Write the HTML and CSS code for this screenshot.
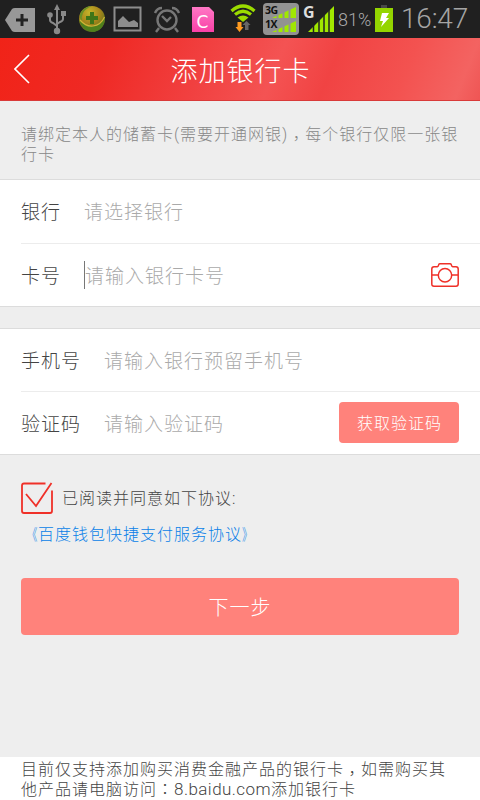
FILE: index.html
```
<!DOCTYPE html>
<html lang="zh-CN">
<head>
<meta charset="utf-8">
<title>添加银行卡</title>
<link rel="stylesheet" href="styles.css">
</head>
<body>
<div class="screen">
  <div class="status">
    <svg class="status-icons" width="338" height="38" viewBox="0 0 338 38">
      <defs>
        <radialGradient id="ball" cx=".4" cy=".25" r=".8"><stop offset="0" stop-color="#c5b52a"/><stop offset=".5" stop-color="#a7851b"/><stop offset="1" stop-color="#4b6e1c"/></radialGradient>
        <linearGradient id="pink" x1="0" y1="0" x2="0" y2="1"><stop offset="0" stop-color="#ff78c5"/><stop offset="1" stop-color="#f940a7"/></linearGradient>
      </defs>
      <path d="M5 20 12 9Q13 8 15 8H35V32H15Q13 32 12 31Z" fill="#989898"/>
      <path d="M22 14V26M16 20H28" stroke="#222" stroke-width="3"/>
      <g fill="none" stroke="#898989" stroke-width="2"><path d="M57 8V31M50 17V20Q50 22 53 23L57 26M63 16V19Q63 21 60 22L57 24"/></g>
      <path d="M57 4 60 10H54ZM61 11H66V16H61Z" fill="#898989"/><circle cx="50" cy="15" r="2.8" fill="#898989"/><circle cx="57" cy="31" r="3.2" fill="#898989"/>
      <circle cx="92" cy="19" r="13" fill="url(#ball)"/>
      <path d="M79 20Q86 27 93 26Q101 25 105 17Q105 29 94 32Q82 31 79 20Z" fill="#4f801c"/>
      <path d="M80 14Q84 6 92 6Q85 9 83 13Q81 17 82 21Q79 18 80 14Z" fill="#6a9126"/>
      <path d="M80 20Q86 27 93 26Q101 25 104.500 17" fill="none" stroke="#d0b336" stroke-width="1.200"/>
      <path d="M90 12H94V16H98V20H94V24H90V20H86V16H90Z" fill="#3f7518"/>
      <path d="M114.500 7.500H140.500V30.500H114.500Z" fill="none" stroke="#8d8d8d" stroke-width="2"/><path d="M118 27V21L123 16 129 22 134 20 138 23V27Z" fill="#8d8d8d"/>
      <g fill="none" stroke="#777" stroke-width="2.400"><circle cx="167" cy="20" r="9.500"/><path d="M155 13Q157 8 162 8M172 8Q177 8 179 13M159 28 156 32M175 28 178 32M162 16 167 21 171 17"/></g>
      <path d="M192 7H209L214 12V32H192Z" fill="url(#pink)"/>
      <text x="202.500" y="28" class="app-letter">C</text>
      <g fill="none" stroke="#9bdc00" stroke-width="3.200"><path d="M231.500 11Q243 1 254.500 11M235 14.500Q243 8 251 14.500"/></g><path d="M237.500 17.500Q243 13.500 248.500 17.500L243 22Z" fill="#9bdc00"/>
      <path d="M237.500 22H241.500V27H243.500L239.500 32 235.500 27H237.500Z" fill="#ff9b20"/><path d="M246.500 21 250.500 25H248.500V30H245V25H242.500Z" fill="#666"/>
      <rect x="263" y="3" width="36" height="32" rx="4" fill="#929292"/>
      <path d="M272 18 296 7V18ZM272 32 296 21V32Z" fill="#a0e800"/><path d="M277.500 7V32M283.500 7V32M289.500 7V32" stroke="#929292" stroke-width="2"/>
      <text x="265" y="14" class="net">3G</text><text x="265" y="27.500" class="net">1X</text>
      <path d="M308 32 334 6V32Z" fill="#a0e800"/><path d="M313.500 25V32M319 19V32M324 15V32M329 10V32" stroke="#222" stroke-width="1.500"/>
      <text x="303" y="18" class="g">G</text>
    </svg>
    <span class="percent">81%</span>
    <svg class="battery" width="18" height="28" viewBox="0 0 18 28"><path d="M0 3H18V27H0Z" fill="#94d500"/><path d="M6 0H12V3H6Z" fill="#484848"/><path d="M7 8H14L11 13H14L6 22 8 16H5Z" fill="#fff"/></svg>
    <span class="time">16:47</span>
  </div>
  <header class="header">
    <svg class="back" width="16" height="30" viewBox="0 0 16 30"><path d="M15 1 1 15 15 29" fill="none" stroke="#fff" stroke-width="1.600"/></svg>
    <h1>添加银行卡</h1>
  </header>
  <p class="hint">请绑定本人的储蓄卡(需要开通网银)<span class="tc comma" lang="zh-TW">，</span>每个银行仅限一张银行卡</p>
  <section class="group">
    <div class="row"><span class="label">银行</span><span class="placeholder">请选择银行</span></div>
    <div class="row card"><span class="label">卡号</span><span class="placeholder caret">请输入银行卡号</span>
      <svg class="camera" width="28" height="24" viewBox="0 0 28 24"><g fill="none" stroke="#ef3028" stroke-width="1.500"><path d="M3 3.700H6.300Q7.500 3.500 7.800 1.500Q8 .8 9 .8H19Q20 .8 20.200 1.500Q20.500 3.500 21.700 3.700H25Q27.200 3.700 27.200 6V21Q27.200 23.200 25 23.200H3Q.8 23.200 .8 21V6Q.8 3.700 3 3.700ZM1 12H7.300M20.700 12H27"/><circle cx="14" cy="12.300" r="6.700"/></g></svg>
    </div>
  </section>
  <section class="group second">
    <div class="row"><span class="label wide">手机号</span><span class="placeholder">请输入银行预留手机号</span></div>
    <div class="row"><span class="label wide">验证码</span><span class="placeholder">请输入验证码</span><button class="code">获取验证码</button></div>
  </section>
  <div class="agree">
    <svg width="32" height="32" viewBox="0 0 32 32"><path d="M24.500 1.500H3Q1 1.500 1 3.500V29Q1 31 3 31H29Q31 31 31 29V8.500M5 12 15 24 30.500 1" fill="none" stroke="#ef3028" stroke-width="1.800"/></svg>
    <span>已阅读并同意如下协议:</span>
  </div>
  <a class="link"><span class="open">《</span>百度钱包快捷支付服务协议<span class="close">》</span></a>
  <button class="next">下一步</button>
  <footer class="footer">目前仅支持添加购买消费金融产品的银行卡<span class="tc comma" lang="zh-TW">，</span>如需购买其<br>他产品请电脑访问<span class="tc" lang="zh-TW">：</span><span class="url">8.baidu.com</span>添加银行卡</footer>
</div>
</body>
</html>
```
FILE: styles.css
```
* { box-sizing: border-box; }
body { margin: 0; font-family: Roboto, "Noto Sans CJK SC", sans-serif; font-weight: 300; }
.screen { width: 480px; height: 800px; display: flex; flex-direction: column; background: #eee; overflow: hidden; }
.status { height: 38px; flex: none; display: flex; align-items: center; background: #202020; color: #999; white-space: nowrap; }
.status-icons { flex: none; }
.app-letter { font: 17px "DejaVu Sans", sans-serif; fill: #fff; text-anchor: middle; }
.net { font: bold 10.5px "Open Sans", sans-serif; fill: #111; letter-spacing: -.5px; }
.g { font: bold 16px "Open Sans", sans-serif; fill: #ddd; }
.percent { width: 37px; font-size: 18px; color: #aaa; }
.battery { flex: none; margin-top: -1px; }
.time { margin-left: 8px; font-size: 28px; line-height: 38px; letter-spacing: -.2px; color: #a5a5a5; }
.header { height: 63px; flex: none; display: flex; align-items: center; padding-left: 14px; background: linear-gradient(112deg, #f12318 0%, #ef2924 22%, #f14040 42%, #f45353 57%, #f14343 68%, #f35250 83%, #f36361 95%, #ef5554 100%); border-bottom: 1px solid #d93a39; }
.back { flex: none; }
h1 { margin: 0 29px 0 0; padding-top: 5px; flex: 1; text-align: center; color: #fff; font-size: 27px; line-height: 40px; letter-spacing: 1px; font-weight: 300; }
.hint { height: 78px; flex: none; margin: 0; padding: 24px 20px 0 21px; font-size: 16px; line-height: 20px; letter-spacing: 1px; color: #888; }
.tc { font-family: "Noto Sans CJK TC", sans-serif; line-height: 0; }
.comma { vertical-align: -4px; }
.group { height: 128px; flex: none; background: #fff; border-top: 1px solid #dcdcdc; border-bottom: 1px solid #dcdcdc; }
.second { height: 127px; margin-top: 21px; }
.row { height: 63px; margin-left: 21px; padding-right: 21px; display: flex; align-items: center; font-size: 19px; line-height: 28px; letter-spacing: 1px; }
.row + .row { border-top: 1px solid #ececec; }
.second .row:first-child { height: 62px; }
.label { width: 63px; padding-top: 2px; color: #444; flex: none; }
.wide { width: 83px; }
.placeholder { padding-top: 2px; color: #aaa; }
.card .label { padding-top: 4px; }
.second .label, .second .placeholder { padding-top: 4px; }
.caret { height: 28px; padding-top: 2px; border-left: 1px solid #777; }
.camera { margin-left: auto; }
button { border: 0; padding: 0; border-radius: 4px; background: #ff827b; color: #fff; font-family: inherit; font-weight: 300; letter-spacing: 1px; }
.code { width: 120px; height: 41px; margin: 0 0 2px auto; padding-left: 1px; font-size: 16px; }
.agree { margin: 27px 21px 0; height: 32px; flex: none; display: flex; align-items: center; gap: 9px; font-size: 16px; line-height: 20px; letter-spacing: 1px; color: #444; }
.agree span { padding-top: 2px; }
.link { margin: 10px 21px 0; flex: none; font-size: 16px; line-height: 22px; letter-spacing: 1px; color: #087fe8; }
.open, .close { display: inline-block; width: 17px; transform: scaleX(.65); }
.open { transform-origin: 100% 50%; }
.close { transform-origin: 0 50%; }
.next { margin: 32px 21px 0; height: 57px; flex: none; font-size: 20px; }
.footer { margin-top: auto; height: 43px; flex: none; padding: 3px 0 0 21px; background: #fff; font-size: 16px; line-height: 20px; letter-spacing: 1px; color: #444; white-space: nowrap; }
.url { font-size: 17px; line-height: 0; letter-spacing: .45px; }
```
